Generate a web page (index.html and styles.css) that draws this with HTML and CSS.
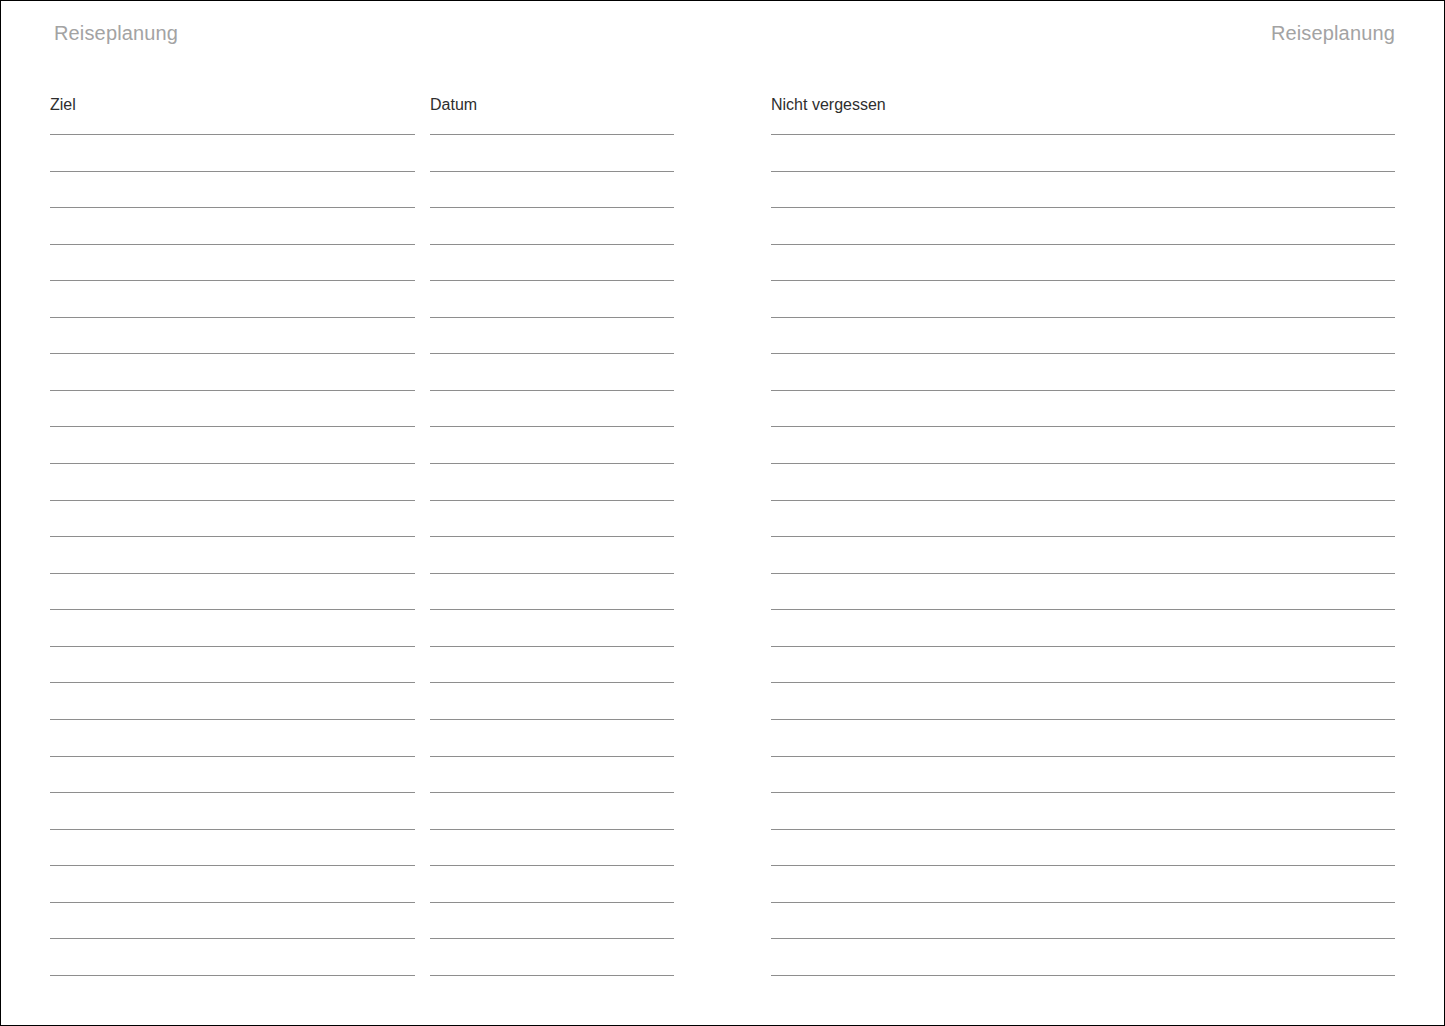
FILE: index.html
```html
<!DOCTYPE html>
<html lang="de">
<head>
  <meta charset="UTF-8" />
  <title>Reiseplanung</title>
  <link rel="stylesheet" href="styles.css">
</head>
<body>
  <div class="page">
    <!-- Kopfzeile -->
    <header class="page-head">
      <span class="page-title">Reiseplanung</span>
      <span class="page-title">Reiseplanung</span>
    </header>

    <div class="spread">
      <!-- linke Seite -->
      <div class="left-page">
        <div class="column col-ziel">
          <div class="row label">Ziel</div>
          <div class="row"></div><div class="row"></div><div class="row"></div><div class="row"></div>
          <div class="row"></div><div class="row"></div><div class="row"></div><div class="row"></div>
          <div class="row"></div><div class="row"></div><div class="row"></div><div class="row"></div>
          <div class="row"></div><div class="row"></div><div class="row"></div><div class="row"></div>
          <div class="row"></div><div class="row"></div><div class="row"></div><div class="row"></div>
          <div class="row"></div><div class="row"></div><div class="row"></div>
        </div>
        <div class="column col-datum">
          <div class="row label">Datum</div>
          <div class="row"></div><div class="row"></div><div class="row"></div><div class="row"></div>
          <div class="row"></div><div class="row"></div><div class="row"></div><div class="row"></div>
          <div class="row"></div><div class="row"></div><div class="row"></div><div class="row"></div>
          <div class="row"></div><div class="row"></div><div class="row"></div><div class="row"></div>
          <div class="row"></div><div class="row"></div><div class="row"></div><div class="row"></div>
          <div class="row"></div><div class="row"></div><div class="row"></div>
        </div>
      </div>

      <!-- rechte Seite -->
      <div class="right-page">
        <div class="column col-notes">
          <div class="row label">Nicht vergessen</div>
          <div class="row"></div><div class="row"></div><div class="row"></div><div class="row"></div>
          <div class="row"></div><div class="row"></div><div class="row"></div><div class="row"></div>
          <div class="row"></div><div class="row"></div><div class="row"></div><div class="row"></div>
          <div class="row"></div><div class="row"></div><div class="row"></div><div class="row"></div>
          <div class="row"></div><div class="row"></div><div class="row"></div><div class="row"></div>
          <div class="row"></div><div class="row"></div><div class="row"></div>
        </div>
      </div>
    </div>
  </div>
</body>
</html>
```

FILE: styles.css
```css
* {
  box-sizing: border-box;
}
body {
  margin: 0;
  background: #fff;
  font-family: 'Liberation Sans', Arial, sans-serif;
  color: #333;
}
.page {
  width: 1445px;
  height: 1026px;
  border: 1px solid #000;
  padding: 20px 49px 0 49px;
  overflow: hidden;
}
/* Kopfzeile */
.page-head {
  display: flex;
  justify-content: space-between;
  height: 24px;
}
.page-title {
  font-size: 20px;
  line-height: 24px;
  letter-spacing: 0.15px;
  color: #a3a3a3;
}
.page-title:first-child {
  padding-left: 4px;
}
/* Spalten */
.spread {
  display: flex;
  margin-top: 53.4px;
}
.left-page {
  display: flex;
  gap: 15px;
}
.right-page {
  margin-left: 97px;
  flex: 1;
}
.column {
  display: flex;
  flex-direction: column;
}
.col-ziel {
  width: 365px;
}
.col-datum {
  width: 244px;
}
.col-notes {
  width: 100%;
}
.row {
  height: 36.57px;
  border-bottom: 1px solid #8e8e8e;
}
.label {
  font-size: 16px;
  line-height: 14px;
  color: #2e2e2e;
}
```
